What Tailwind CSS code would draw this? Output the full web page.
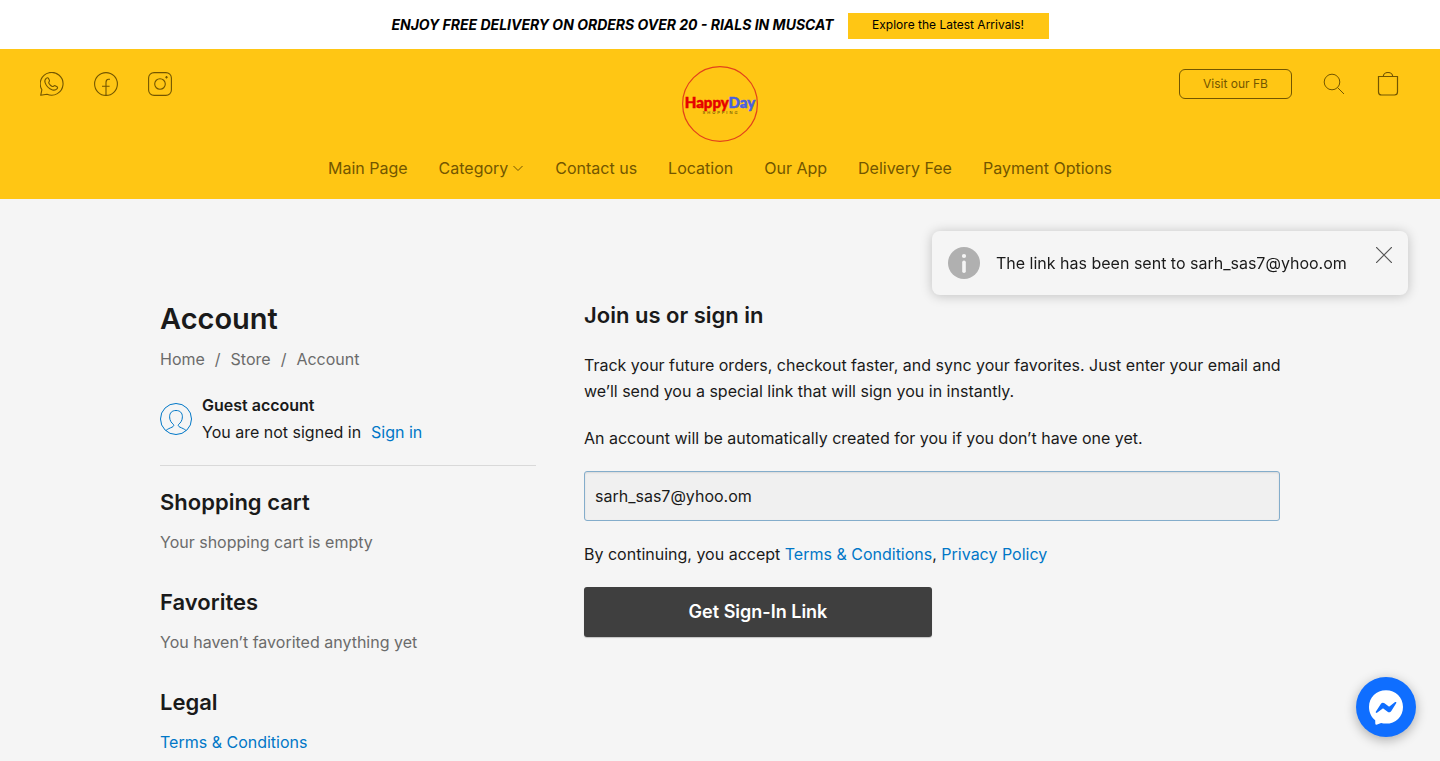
<!DOCTYPE html>
<html lang="en">
<head>
<meta charset="utf-8">
<meta name="viewport" content="width=device-width, initial-scale=1">
<title>Account – Happy Day Shopping</title>
<script src="https://cdn.jsdelivr.net/npm/@tailwindcss/browser@4"></script>
</head>
<body class="min-h-screen bg-[#f5f5f5] font-['Inter',sans-serif] text-base text-[#1a1a1a]">

<div class="flex min-h-[49px] items-center justify-center gap-3.5 bg-white pt-1 pb-1">
  <p class="text-sm font-bold italic text-black">ENJOY FREE DELIVERY ON ORDERS OVER 20 - RIALS IN MUSCAT</p>
  <a href="#" class="mt-0.5 flex h-[26px] w-[201px] items-center justify-center bg-[#ffc614] pb-0.5 text-xs text-black">Explore the Latest Arrivals!</a>
</div>

<header class="bg-[#ffc614] text-[#735600]">
  <div class="grid h-[106px] grid-cols-[1fr_auto_1fr] items-start px-10 pt-[17px]">
    <div class="flex items-center gap-[30px] pt-1.5">
      <a href="#" aria-label="WhatsApp"><svg class="size-6" viewBox="0 0 24 24" fill="none" stroke="currentColor" stroke-width="1.1"><path d="M.7 23.3l1.2-5.6A11.4 11.4 0 1 1 7 22.2z" stroke-linejoin="round"/><path d="M6.500 6.100c.6-.6 1.500-.5 1.900.2l1 1.900c.3.6.1 1-.3 1.500-.5.5-.5.9-.2 1.500.8 1.500 1.800 2.500 3.300 3.200.6.300 1 .200 1.500-.300.500-.500.900-.600 1.500-.300l1.800 1c.7.400.8 1.300.200 1.900-1.300 1.400-2.900 1.800-4.700 1.200-3.700-1.200-6.400-4-7.500-7.500-.5-1.700 0-3.100 1.500-4.300z"/></svg></a>
      <a href="#" aria-label="Facebook"><svg class="size-6" viewBox="0 0 24 24" fill="none" stroke="currentColor" stroke-width="1.1"><circle cx="12" cy="12" r="11.400"/><path d="M12 23.400V10.500c0-2.200 1-3.200 2.500-3.200H16M8 14.300h7.600"/></svg></a>
      <a href="#" aria-label="Instagram"><svg class="size-6" viewBox="0 0 24 24" fill="none" stroke="currentColor" stroke-width="1.100"><rect x=".6" y=".6" width="22.800" height="22.800" rx="5.500"/><circle cx="12" cy="12" r="5.300"/><path d="M18.500 4v2.600M17.200 5.300h2.600"/></svg></a>
    </div>
    <a href="#" aria-label="Happy Day Shopping">
      <svg class="size-[76px]" viewBox="0 0 76 76" fill="none">
        <circle cx="38" cy="38" r="37.400" stroke="#e2421b" stroke-width="1.200"/>
        <text x="38" y="42" text-anchor="middle" font-family="Lato, sans-serif" font-weight="900" font-size="15"><tspan fill="#e60000" stroke="#e60000" stroke-width=".5">Happy</tspan><tspan fill="#4a5fe0" stroke="#4a5fe0" stroke-width=".5">Day</tspan></text>
        <text x="39" y="48" text-anchor="middle" font-family="Inter, sans-serif" font-size="4" letter-spacing="2" fill="#3d2e00">SHOPPING</text>
      </svg>
    </a>
    <div class="flex items-center justify-end gap-[30px] pt-[3px]">
      <a href="#" class="flex h-[30px] w-[113px] items-center justify-center rounded-md border border-[#735600] text-xs">Visit our FB</a>
      <button type="button" aria-label="Search"><svg class="size-6" viewBox="0 0 24 24" fill="none" stroke="currentColor"><circle cx="10" cy="10" r="7.800"/><path d="M15.500 15.500l6.500 6.500"/></svg></button>
      <button type="button" aria-label="Shopping bag"><svg class="size-6" viewBox="0 0 24 24" fill="none" stroke="currentColor" stroke-width="1.200"><path d="M2.500 4.500h19v15.500q0 3-3 3h-13q-3 0-3-3zM7.300 4.500a4.700 4 0 0 1 9.400 0"/></svg></button>
    </div>
  </div>
  <nav class="flex h-11 items-start justify-center gap-[31px] pt-px">
    <a href="#">Main Page</a>
    <a href="#" class="flex items-center gap-1">Category <svg class="size-3" viewBox="0 0 12 12" fill="none" stroke="currentColor"><path d="M1.500 4l4.500 4.500L10.500 4"/></svg></a>
    <a href="#">Contact us</a>
    <a href="#">Location</a>
    <a href="#">Our App</a>
    <a href="#">Delivery Fee</a>
    <a href="#">Payment Options</a>
  </nav>
</header>

<main class="mx-auto grid max-w-[1120px] grid-cols-[376px_1fr] gap-12 pt-[99px]">
  <aside>
    <h1 class="text-[29px] leading-[42px] font-semibold">Account</h1>
    <nav aria-label="Breadcrumb" class="mt-1.5 flex gap-2.5 leading-[26px] text-[#6b6b6b]">
      <a href="#">Home</a><span>/</span><a href="#">Store</a><span>/</span><span>Account</span>
    </nav>
    <section class="mt-5 flex items-center gap-2.5 border-b border-[#d9d9d9] pb-[19px]">
      <svg class="size-8 text-[#0077c7]" viewBox="0 0 32 32" fill="none" stroke="currentColor"><circle cx="16" cy="16" r="15.500"/><path d="M6 27.500c1.500-1.500 4-2.400 6-3.300 1.500-.7 2.200-1.800 1.500-2.700C11.500 20 9.600 17.500 9.600 13.800 9.600 9.800 12 7.500 16 7.500s6.400 2.300 6.400 6.300c0 3.700-1.900 6.200-3.900 7.700-.7.900 0 2 1.500 2.700 2 .9 4.500 1.800 6 3.300"/></svg>
      <div class="leading-[27px]">
        <p class="font-semibold">Guest account</p>
        <p class="flex gap-2.5">You are not signed in <a href="#" class="text-[#0077c7]">Sign in</a></p>
      </div>
    </section>
    <section class="mt-[19px]">
      <h2 class="text-[22px] leading-[34px] font-semibold">Shopping cart</h2>
      <p class="mt-2.5 leading-[26px] text-[#6b6b6b]">Your shopping cart is empty</p>
    </section>
    <section class="mt-[30px]">
      <h2 class="text-[22px] leading-[34px] font-semibold">Favorites</h2>
      <p class="mt-2.5 leading-[26px] text-[#6b6b6b]">You haven’t favorited anything yet</p>
    </section>
    <section class="mt-[30px]">
      <h2 class="text-[22px] leading-[34px] font-semibold">Legal</h2>
      <p class="mt-2.5 leading-[26px]"><a href="#" class="text-[#0077c7]">Terms &amp; Conditions</a></p>
    </section>
  </aside>

  <form class="leading-[26px]">
    <h2 class="text-[22px] leading-[34px] font-semibold">Join us or sign in</h2>
    <p class="mt-5 -mr-4">Track your future orders, checkout faster, and sync your favorites. Just enter your email and we’ll send you a special link that will sign you in instantly.</p>
    <p class="mt-[21px]">An account will be automatically created for you if you don’t have one yet.</p>
    <input type="email" aria-label="Email" value="sarh_sas7@yhoo.om" class="mt-5 block h-[50px] w-full rounded-[3px] border border-[#84adcb] bg-[#f0f0f0] px-2.5 shadow-[inset_0_1px_2px_rgba(0,0,0,0.1)] outline-none">
    <p class="mt-5">By continuing, you accept <a href="#" class="text-[#0077c7]">Terms &amp; Conditions</a>, <a href="#" class="text-[#0077c7]">Privacy Policy</a></p>
    <button type="button" class="mt-5 h-[50px] w-1/2 rounded-[3px] bg-[#3f3f3f] text-lg font-semibold text-white shadow-[0_1px_1px_rgba(0,0,0,0.2)]">Get Sign-In Link</button>
  </form>
</main>

<div role="status" class="fixed top-[231px] right-8 flex h-16 w-[476px] items-start rounded-lg bg-[#f5f5f5] p-4 shadow-[0_1px_12px_rgba(0,0,0,0.22)]">
  <svg class="size-8 shrink-0" viewBox="0 0 32 32"><circle cx="16" cy="16" r="16" fill="#b0b0b0"/><circle cx="16" cy="9" r="2.100" fill="#f5f5f5"/><rect x="14.200" y="13.500" width="3.600" height="12.500" rx="1.800" fill="#f5f5f5"/></svg>
  <p class="ml-4 grow leading-8 whitespace-nowrap">The link has been sent to sarh_sas7@yhoo.om</p>
  <button type="button" aria-label="Close" class="shrink-0"><svg class="size-4" viewBox="0 0 16 16" fill="none" stroke="#555" stroke-width="1.200"><path d="M0 0l16 16M16 0L0 16"/></svg></button>
</div>

<button type="button" aria-label="Messenger chat" class="fixed right-6 bottom-6 flex size-[60px] items-center justify-center rounded-full bg-[#0f6eff] shadow-[0_3px_12px_rgba(0,0,0,0.3)]">
  <svg class="size-[60px]" viewBox="0 0 60 60"><path d="M30 13.200c9.700 0 17 7.100 17 16.700s-7.300 16.700-17 16.700c-1.700 0-3.400-.2-4.900-.7l-3.900 1.700c-1 .4-1.900-.2-1.900-1.200l-.1-3.200C15.400 40.100 13 35.500 13 29.900c0-9.600 7.300-16.700 17-16.700z" fill="#fff"/><path d="M19.800 34.800l5-7.900c.8-1.300 2.500-1.600 3.700-.7l4 3c.4.300.8.300 1.200 0l5.400-4.100c.7-.5 1.600.3 1.200 1l-5 7.900c-.8 1.300-2.500 1.600-3.700.7l-4-3c-.4-.3-.8-.3-1.200 0L21 35.800c-.7.500-1.600-.3-1.200-1z" fill="#0f6eff"/></svg>
</button>
</body>
</html>
